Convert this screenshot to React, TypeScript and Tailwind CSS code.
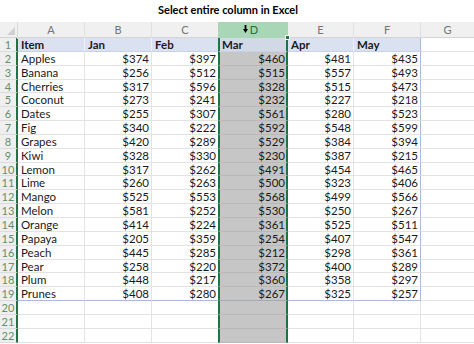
import React from "react";

const rows: [string, number, number, number, number, number][] = [
  ["Apples", 374, 397, 460, 481, 435],
  ["Banana", 256, 512, 515, 557, 493],
  ["Cherries", 317, 596, 328, 515, 473],
  ["Coconut", 273, 241, 232, 227, 218],
  ["Dates", 255, 307, 561, 280, 523],
  ["Fig", 340, 222, 592, 548, 599],
  ["Grapes", 420, 289, 529, 384, 394],
  ["Kiwi", 328, 330, 230, 387, 215],
  ["Lemon", 317, 262, 491, 454, 465],
  ["Lime", 260, 263, 500, 323, 406],
  ["Mango", 525, 553, 568, 499, 566],
  ["Melon", 581, 252, 530, 250, 267],
  ["Orange", 414, 224, 361, 525, 511],
  ["Papaya", 205, 359, 254, 407, 547],
  ["Peach", 445, 285, 212, 298, 361],
  ["Pear", 258, 220, 372, 400, 289],
  ["Plum", 448, 217, 360, 358, 297],
  ["Prunes", 408, 280, 267, 325, 257],
];

const cols = "grid grid-cols-[18px_67px_67px_66px_70px_66px_67px_1fr]";
const font = { fontFamily: "Lato, 'Open Sans', sans-serif" };

function RowNum({ n }: { n: number }) {
  return (
    <div className="h-[13.85px] bg-[#efefef] border-r-2 border-r-[#217346] border-b border-b-[#dcdcdc] text-[11px] font-normal leading-[13px] text-[#5f8f70] text-center">
      {n}
    </div>
  );
}

export default function App() {
  return (
    <div className="w-[474px] h-[344px] overflow-hidden bg-white text-[#1a1a1a]" style={font}>
      <div className="h-[22px] pl-[158px] pt-[2px] text-[11px] font-bold leading-[16px] text-black">
        Select entire column in Excel
      </div>
      {/* column header */}
      <div className={`${cols} h-[16px] bg-[#f0f0f0] text-[11px] leading-[16px] text-[#747474] text-center border-b border-b-[#d4d4d4]`}>
        <div className="relative border-r border-r-[#dadada]">
          <svg className="absolute left-[7px] top-[5px]" width="8" height="8" viewBox="0 0 8 8">
            <polygon points="8,0 8,8 0,8" fill="#d0d0d0" />
          </svg>
        </div>
        <div className="border-r border-r-[#e0e0e0]">A</div>
        <div className="border-r border-r-[#e0e0e0]">B</div>
        <div>C</div>
        <div className="relative bg-[#a9d6b7] text-[#1e6d40] border-b-2 border-b-[#217346] -mb-px">
          <svg className="absolute left-[25px] top-[3px]" width="5" height="8" viewBox="0 0 5 8">
            <rect x="1.6" y="0" width="1.8" height="5" fill="#000" />
            <polygon points="0,4 5,4 2.5,8" fill="#000" />
          </svg>
          <span className="pl-[2px]">D</span>
        </div>
        <div className="border-r border-r-[#e0e0e0]">E</div>
        <div className="border-r border-r-[#e0e0e0]">F</div>
        <div>G</div>
      </div>
      {/* row 1: table header */}
      <div className={`${cols} text-[11.5px] font-bold leading-[13px]`}>
        <RowNum n={1} />
        <div className="h-[13.85px] bg-[#dae2f2] border-r border-r-[#eef1f8] border-b border-b-[#c8d2e6] pl-[3px]">Item</div>
        <div className="h-[13.85px] bg-[#dae2f2] border-r border-r-[#eef1f8] border-b border-b-[#c8d2e6] pl-[3px]">Jan</div>
        <div className="h-[13.85px] bg-[#dae2f2] border-b border-b-[#c8d2e6] pl-[3px]">Feb</div>
        <div className="relative h-[13.85px] bg-[#d2d9e6] border-x-2 border-x-[#217346] border-b border-b-[#c8d2e6] pl-[2px]">
          Mar
          <div className="absolute -right-[4px] -top-[3px] w-[5px] h-[5px] bg-[#217346] border border-white" />
        </div>
        <div className="h-[13.85px] bg-[#dae2f2] border-r border-r-[#eef1f8] border-b border-b-[#c8d2e6] pl-[3px]">Apr</div>
        <div className="h-[13.85px] bg-[#dae2f2] border-r border-r-[#a9bbdb] border-b border-b-[#c8d2e6] pl-[3px]">May</div>
        <div className="h-[13.85px] border-b border-b-[#e3e3e3]" />
      </div>
      {rows.map((r, i) => {
        const last = i === rows.length - 1;
        const bb = last ? "border-b-[#a9bbdb]" : "border-b-[#e3e3e3]";
        return (
          <div key={r[0]} className={`${cols} text-[11.5px] leading-[13px]`}>
            <RowNum n={i + 2} />
            <div className={`h-[13.85px] border-r border-r-[#e3e3e3] border-b ${bb} pl-[3px]`}>{r[0]}</div>
            <div className={`h-[13.85px] border-r border-r-[#e3e3e3] border-b ${bb} text-right pr-[2px]`}>${r[1]}</div>
            <div className={`h-[13.85px] border-b ${bb} text-right pr-[2px]`}>${r[2]}</div>
            <div className={`h-[13.85px] bg-[#c6c6c6] border-x-2 border-x-[#217346] border-b ${last ? "border-b-[#a3aab8]" : "border-b-[#b9b9b9]"} text-right pr-[1px]`}>${r[3]}</div>
            <div className={`h-[13.85px] border-r border-r-[#e3e3e3] border-b ${bb} text-right pr-[2px]`}>${r[4]}</div>
            <div className={`h-[13.85px] border-r border-r-[#a9bbdb] border-b ${bb} text-right pr-[2px]`}>${r[5]}</div>
            <div className="h-[13.85px] border-b border-b-[#e3e3e3]" />
          </div>
        );
      })}
      {[20, 21, 22].map((n) => (
        <div key={n} className={`${cols} text-[11.5px] leading-[13px]`}>
          <RowNum n={n} />
          <div className="h-[13.85px] border-r border-r-[#e3e3e3] border-b border-b-[#e3e3e3]" />
          <div className="h-[13.85px] border-r border-r-[#e3e3e3] border-b border-b-[#e3e3e3]" />
          <div className="h-[13.85px] border-b border-b-[#e3e3e3]" />
          <div className="h-[13.85px] bg-[#c6c6c6] border-x-2 border-x-[#217346] border-b border-b-[#b9b9b9]" />
          <div className="h-[13.85px] border-r border-r-[#e3e3e3] border-b border-b-[#e3e3e3]" />
          <div className="h-[13.85px] border-r border-r-[#e3e3e3] border-b border-b-[#e3e3e3]" />
          <div className="h-[13.85px] border-b border-b-[#e3e3e3]" />
        </div>
      ))}
    </div>
  );
}
